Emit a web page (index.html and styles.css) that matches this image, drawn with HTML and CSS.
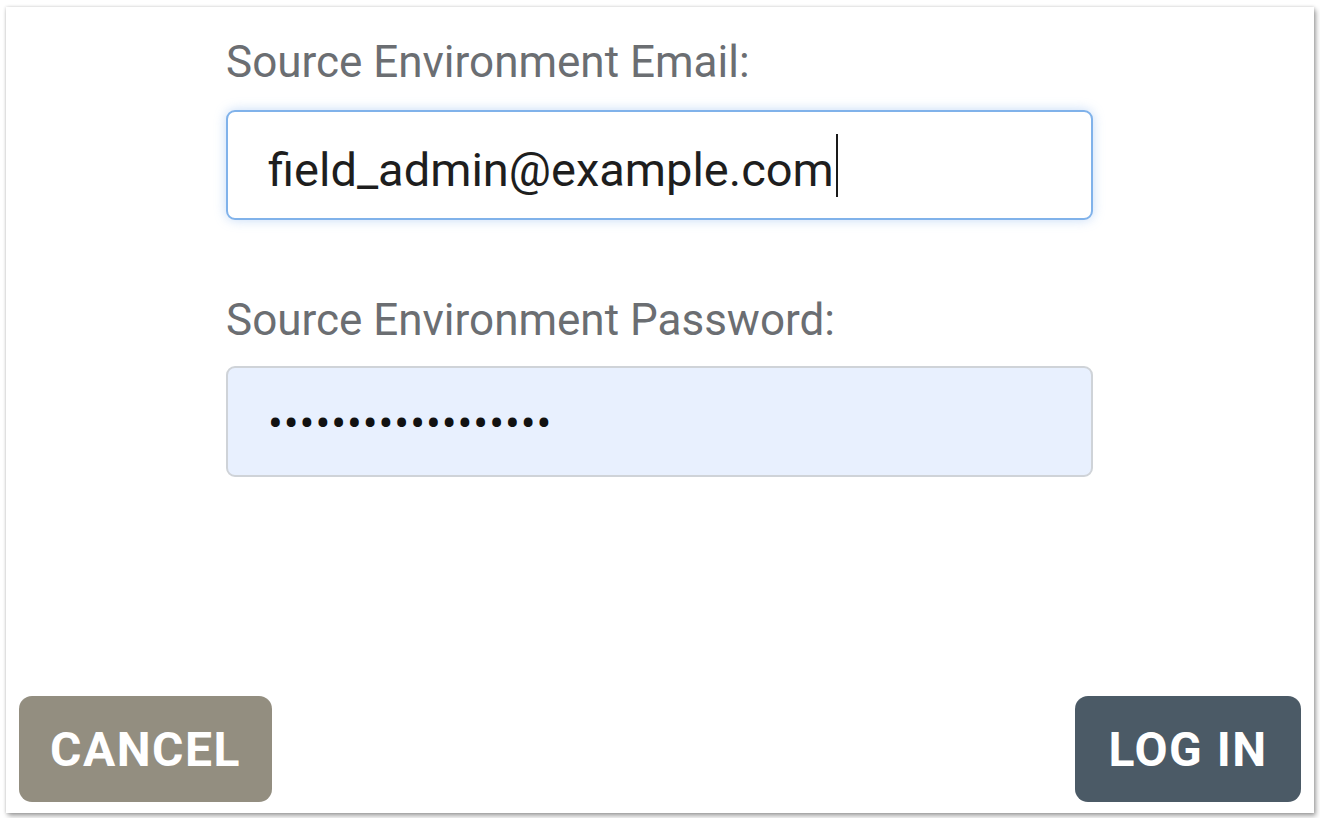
FILE: index.html
```html
<!DOCTYPE html>
<html lang="en">
<head>
<meta charset="utf-8">
<title>Source Environment Login</title>
<link rel="stylesheet" href="styles.css">
</head>
<body>
<div class="dialog">
  <form class="form">
    <label class="label">Source Environment Email:</label>
    <div class="field field-focus"><span class="value">field_admin@example.com</span><span class="caret"></span></div>
    <label class="label label-gap">Source Environment Password:</label>
    <div class="field field-autofill"><span class="dots">••••••••••••••••••</span></div>
  </form>
  <div class="actions">
    <button class="btn btn-cancel" type="button">CANCEL</button>
    <button class="btn btn-login" type="button">LOG IN</button>
  </div>
</div>
</body>
</html>
```
FILE: styles.css
```css
html, body {
  margin: 0;
  padding: 0;
  background: #ffffff;
}
body {
  width: 1320px;
  height: 818px;
  padding: 7px 6px 5px 6px;
  box-sizing: border-box;
  font-family: Roboto, "Liberation Sans", sans-serif;
}
.dialog {
  width: 1308px;
  height: 806px;
  background: #ffffff;
  box-shadow: 2px 3px 5px rgba(0, 0, 0, 0.35), 0 0 3px rgba(0, 0, 0, 0.18);
  display: flex;
  flex-direction: column;
  box-sizing: border-box;
}
.form {
  display: flex;
  flex-direction: column;
  margin: 29px 0 0 220px;
  width: 867px;
}
.label {
  font-size: 44px;
  line-height: 52px;
  color: #6b6e72;
  margin-bottom: 22px;
}
.label-gap {
  margin-top: 74px;
  margin-bottom: 20px;
}
.field {
  height: 110px;
  box-sizing: border-box;
  border-radius: 9px;
  padding-left: 40px;
  display: flex;
  align-items: center;
}
.field-focus {
  border: 2px solid #80b2ea;
  box-shadow: 0 0 12px rgba(110, 165, 235, 0.4);
  background: #ffffff;
}
.value {
  font-size: 47px;
  color: #1e1e1e;
  line-height: 1;
  padding-top: 8px;
}
.caret {
  width: 2px;
  height: 63px;
  background: #1a1a1a;
  margin-left: 2px;
}
.field-autofill {
  height: 111px;
  border: 2px solid #cfd3d8;
  background: #e8f0fe;
}
.dots {
  font-size: 44px;
  color: #111;
  letter-spacing: 0.95px;
  line-height: 1;
  padding-left: 0;
  padding-top: 4px;
}
.actions {
  margin-top: auto;
  display: flex;
  justify-content: space-between;
  padding: 0 13px 11px 13px;
}
.btn {
  border: none;
  height: 106px;
  border-radius: 13px;
  font-family: Roboto, "Liberation Sans", sans-serif;
  font-weight: 700;
  font-size: 48px;
  color: #ffffff;
  letter-spacing: 1.5px;
  padding: 0;
  cursor: pointer;
}
.btn-cancel {
  width: 253px;
  background: #938e80;
}
.btn-login {
  width: 226px;
  background: #4b5a66;
}
```
